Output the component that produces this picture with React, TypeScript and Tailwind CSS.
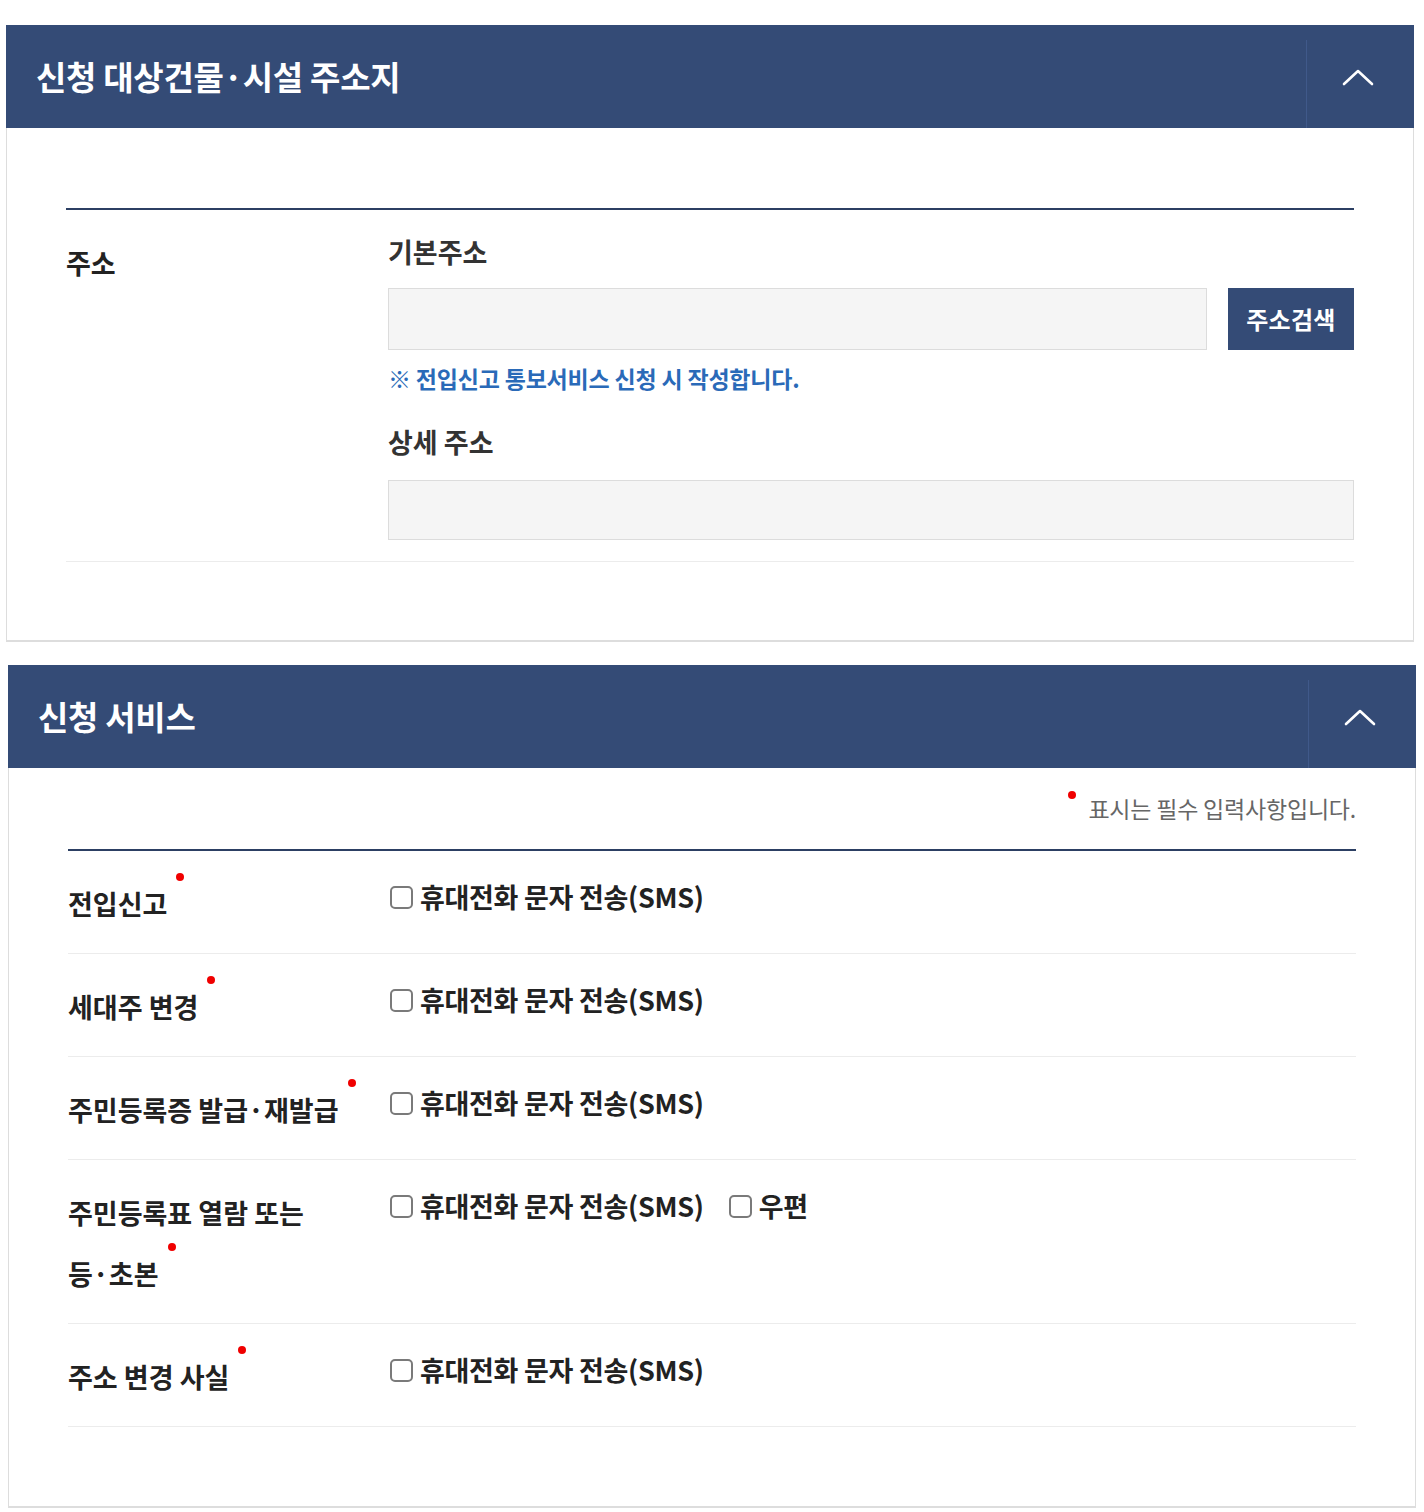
import React from "react";

const font = "font-['Noto_Sans_CJK_KR','Noto_Sans',sans-serif]";

const services = [
  { label: "전입신고", post: false },
  { label: "세대주 변경", post: false },
  { label: "주민등록증 발급·재발급", post: false },
  { label: "주민등록표 열람 또는 등·초본", post: true },
  { label: "주소 변경 사실", post: false },
];

function PanelHeader({ title }: { title: string }) {
  return (
    <div className="flex h-[103px] items-stretch bg-[#344b76]">
      <h2 className="flex flex-1 items-center pl-[30px] text-[33px] font-bold tracking-[-0.3px] text-white">
        {title}
      </h2>
      <div className="mt-[15px] w-px bg-[#40598a]" />
      <button className="flex w-[107px] items-center justify-center pr-[6px]">
        <svg width="32" height="18" viewBox="0 0 32 18" fill="none">
          <path d="M2 16L16 3l14 13" stroke="white" strokeWidth="2.6" strokeLinecap="round" strokeLinejoin="round" />
        </svg>
      </button>
    </div>
  );
}

function Dot() {
  return <span className="ml-[9px] inline-block h-[8px] w-[8px] rounded-full bg-[#f00000] align-top" />;
}

function Label({ text }: { text: string }) {
  const words = text.split(" ");
  return (
    <>
      {words.map((w, i) => (
        <React.Fragment key={i}>
          <span className="whitespace-nowrap">
            {w}
            {i === words.length - 1 && <Dot />}
          </span>
          {i < words.length - 1 && " "}
        </React.Fragment>
      ))}
    </>
  );
}

function Check({ text }: { text: string }) {
  return (
    <label className="flex items-center gap-[7px]">
      <span className="inline-block h-[23px] w-[23px] rounded-[5px] border-2 border-[#7a7a7a] bg-white" />
      <span className="text-[27px] font-bold tracking-[-0.3px] text-[#222]">{text}</span>
    </label>
  );
}

export default function App() {
  return (
    <div className={`${font} min-h-[1512px] bg-white pt-[25px]`}>
      {/* 신청 대상건물·시설 주소지 */}
      <section className="ml-[6px] w-[1408px]">
        <PanelHeader title="신청 대상건물·시설 주소지" />
        <div className="border-x border-b-2 border-[#dddddd] px-[59px] pt-[80px] pb-[78px]">
          <div className="flex border-t-2 border-b border-t-[#2c3f63] border-b-[#ececec] pt-[22px] pb-[21px]">
            <div className="w-[322px] text-[27px] font-bold leading-[61px] text-[#222]">주소</div>
            <div className="flex-1">
              <div className="text-[27px] font-bold leading-[40px] text-[#333]">기본주소</div>
              <div className="mt-[16px] flex gap-[21px]">
                <div className="h-[62px] flex-1 border border-[#dcdcdc] bg-[#f5f5f5]" />
                <button className="h-[62px] w-[126px] bg-[#344b76] text-[24px] font-bold tracking-[0.3px] text-white">
                  주소검색
                </button>
              </div>
              <p className="mt-[14px] text-[23px] font-bold leading-[28px] tracking-[-0.2px] text-[#2a6ab8]">
                ※ 전입신고 통보서비스 신청 시 작성합니다.
              </p>
              <div className="mt-[30px] text-[27px] font-bold leading-[40px] text-[#333]">상세 주소</div>
              <div className="mt-[18px] h-[60px] border border-[#dcdcdc] bg-[#f5f5f5]" />
            </div>
          </div>
        </div>
      </section>

      {/* 신청 서비스 */}
      <section className="mt-[23px] ml-[8px] w-[1408px]">
        <PanelHeader title="신청 서비스" />
        <div className="border-x border-b-2 border-[#dddddd] px-[59px] pt-[25px] pb-[79px]">
          <p className="flex justify-end text-[23px] leading-[30px] tracking-[-0.2px] text-[#666]">
            <span className="mr-[12px] mt-[-2px] inline-block h-[8px] w-[8px] rounded-full bg-[#f00000]" />
            표시는 필수 입력사항입니다.
          </p>
          <div className="mt-[26px] border-t-2 border-[#2c3f63]">
            {services.map((s) => (
              <div key={s.label} className="flex border-b border-[#ececec] pt-[22px] pb-[19px]">
                <div className="w-[320px] pr-[10px] text-[27px] font-bold leading-[61px] text-[#222]">
                  <Label text={s.label} />
                </div>
                <div className="flex h-[48px] items-center gap-[25px] pl-[2px]">
                  <Check text="휴대전화 문자 전송(SMS)" />
                  {s.post && <Check text="우편" />}
                </div>
              </div>
            ))}
          </div>
        </div>
      </section>
    </div>
  );
}
